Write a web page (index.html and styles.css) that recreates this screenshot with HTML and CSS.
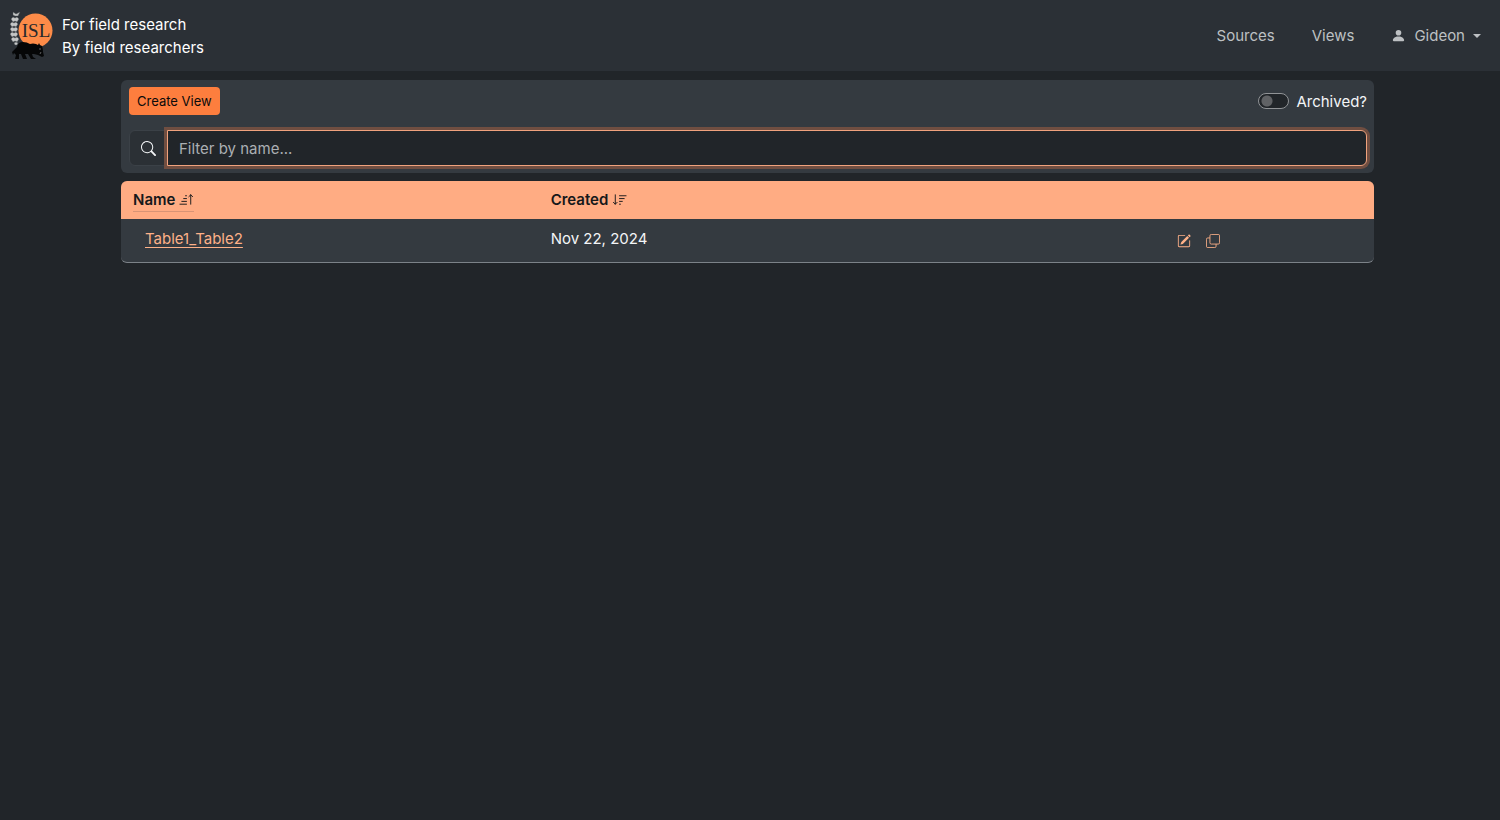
FILE: index.html
```html
<!DOCTYPE html>
<html lang="en">
<head>
    <meta charset="UTF-8">
    <meta name="viewport" content="width=device-width, initial-scale=1.0">
    <title>Views</title>
    <link rel="stylesheet" href="styles.css">
</head>
<body>
    <header class="navbar">
        <a class="brand" href="#">
            <svg class="logo" viewBox="0 0 46 50" aria-hidden="true">
                <circle cx="26.5" cy="19.5" r="17" fill="#fd8b48"/>
                <text class="logo-text" x="27" y="26" text-anchor="middle">ISL</text>
                <g fill="#c4c6c6" stroke="#4a4e51" stroke-width=".4">
                    <path d="M4 1l3 2 4-2-2 4H6L4 4z"/>
                    <path d="M2 8l2-2 2 1 2-1 2 2-2 3-2-1-2 1z"/>
                    <path d="M1 13l2-2 2 1 2-1 2 2-2 3-2-1-2 1z"/>
                    <path d="M1 18l2-2 2 1 2-1 2 2-2 3-2-1-2 1z"/>
                    <path d="M1 23l2-2 2 1 2-1 2 2-2 3-2-1-2 1z"/>
                    <path d="M2 28l2-2 2 1 2-1 2 2-2 3-2-1-2 1z"/>
                    <path d="M5 32l2-1 2 1-1 2-2 0z"/>
                </g>
                <path d="M8 36Q9 31 14 31q4 0 7 2 3-1 6 0l2 1 1-2 1 2 2 1q1 3 1 6l1 4-2 1-4-2-4-1-2 0 1 3 3 2h-5l-3-5-3 0 2 5h-4l-2-5-2 0 0 5h-4l1-4-2-2-1 2-1-3z" fill="#050607"/>
                <path d="M30 38l2 0M31 43l1-2" stroke="#777" stroke-width=".8"/>
            </svg>
            <span class="tagline">For field research<br>By field researchers</span>
        </a>
        <nav class="nav-links">
            <a href="#">Sources</a>
            <a href="#">Views</a>
            <button type="button" class="user-menu">
                <svg class="user-icon" viewBox="0 0 16 16" fill="currentColor" aria-hidden="true"><path d="M3 14s-1 0-1-1 1-4 6-4 6 3 6 4-1 1-1 1zm5-6a3 3 0 1 0 0-6 3 3 0 0 0 0 6"/></svg>
                Gideon
                <span class="caret"></span>
            </button>
        </nav>
    </header>

    <main class="container">
        <section class="toolbar">
            <div class="toolbar-row">
                <button type="button" class="btn-create">Create View</button>
                <label class="switch"><input type="checkbox"> Archived?</label>
            </div>
            <div class="filter">
                <label class="filter-icon" for="filterName" aria-label="Filter by name">
                    <svg viewBox="0 0 16 16" fill="currentColor" aria-hidden="true"><path d="M11.742 10.344a6.5 6.5 0 1 0-1.397 1.398h-.001q.044.06.098.115l3.85 3.85a1 1 0 0 0 1.415-1.414l-3.85-3.85a1 1 0 0 0-.115-.1zM12 6.5a5.5 5.5 0 1 1-11 0 5.5 5.5 0 0 1 11 0"/></svg>
                </label>
                <input type="text" id="filterName" class="filter-input" placeholder="Filter by name...">
            </div>
        </section>

        <div class="table-card">
            <table class="views">
                <thead>
                    <tr>
                        <th class="col-name">
                            <button type="button" class="sort active">Name
                                <svg viewBox="0 0 16 16" fill="none" stroke="currentColor" stroke-linecap="round" stroke-linejoin="round" aria-hidden="true"><path d="M12.5 13V3M10.5 5l2-2 2 2M7 4h1M5 7h3M3 10h5M1 13h7"/></svg>
                            </button>
                        </th>
                        <th class="col-created">
                            <button type="button" class="sort">Created
                                <svg viewBox="0 0 16 16" fill="none" stroke="currentColor" stroke-linecap="round" stroke-linejoin="round" aria-hidden="true"><path d="M3.5 3v10M1.5 11l2 2 2-2M8 4h7M8 7h5M8 10h3M8 13h1"/></svg>
                            </button>
                        </th>
                        <th></th>
                    </tr>
                </thead>
                <tbody>
                    <tr>
                        <td class="name-cell"><a href="#">Table1_Table2</a></td>
                        <td>Nov 22, 2024</td>
                        <td>
                            <div class="actions">
                                <button type="button" aria-label="Edit"><svg viewBox="0 0 16 16" fill="currentColor" aria-hidden="true"><path d="M15.502 1.94a.5.5 0 0 1 0 .706L14.459 3.69l-2-2L13.502.646a.5.5 0 0 1 .707 0l1.293 1.293zm-1.75 2.456-2-2L4.939 9.21a.5.5 0 0 0-.121.196l-.805 2.414a.25.25 0 0 0 .316.316l2.414-.805a.5.5 0 0 0 .196-.12z"/><path d="M1 13.5A1.5 1.5 0 0 0 2.5 15h11a1.5 1.5 0 0 0 1.5-1.5v-6a.5.5 0 0 0-1 0v6a.5.5 0 0 1-.5.5h-11a.5.5 0 0 1-.5-.5v-11a.5.5 0 0 1 .5-.5H9a.5.5 0 0 0 0-1H2.5A1.5 1.5 0 0 0 1 2.5z"/></svg></button>
                                <button type="button" aria-label="Copy"><svg viewBox="0 0 16 16" fill="none" stroke="currentColor" aria-hidden="true"><rect x="4.5" y=".5" width="11" height="11" rx="1.5"/><path d="M4.5 4.5H2A1.5 1.5 0 0 0 .5 6v8A1.5 1.5 0 0 0 2 15.5h8a1.5 1.5 0 0 0 1.5-1.5v-2.5"/></svg></button>
                            </div>
                        </td>
                    </tr>
                </tbody>
            </table>
        </div>
    </main>
</body>
</html>
```
FILE: styles.css
```css
* {
    box-sizing: border-box;
}

body {
    margin: 0;
    min-height: 100vh;
    background-color: #212529;
    color: #f3f5f7;
    font-family: Inter, Roboto, sans-serif;
    font-size: 15px;
    line-height: 23px;
}

button {
    border: none;
    background: none;
    padding: 0;
    color: inherit;
    font: inherit;
    cursor: pointer;
}

.navbar {
    display: flex;
    align-items: center;
    justify-content: space-between;
    height: 71px;
    padding: 0 19px 0 9px;
    background-color: #2b3036;
}

.brand {
    display: flex;
    align-items: center;
    gap: 7px;
    color: #ffffff;
    text-decoration: none;
}

.logo {
    width: 46px;
    height: 50px;
}

.logo-text {
    fill: #26292c;
    font-family: "Liberation Serif", serif;
    font-size: 19px;
}

.nav-links {
    display: flex;
    align-items: center;
    gap: 37px;
    color: #bdc0c3;
}

.nav-links a {
    color: inherit;
    text-decoration: none;
}

.user-menu {
    display: flex;
    align-items: center;
    gap: 8px;
}

.user-icon {
    width: 15px;
    height: 15px;
}

.caret {
    border-top: 4px solid;
    border-left: 4px solid transparent;
    border-right: 4px solid transparent;
}

.container {
    display: flex;
    flex-direction: column;
    gap: 8px;
    padding: 9px 126px 0 121px;
}

.toolbar {
    display: flex;
    flex-direction: column;
    gap: 15px;
    padding: 7px 7px 7px 8px;
    border-radius: 6px;
    background-color: #343a40;
}

.toolbar-row {
    display: flex;
    align-items: center;
    justify-content: space-between;
}

.btn-create {
    height: 28px;
    padding: 0 8px;
    border-radius: 4px;
    background-color: #fd7e3e;
    color: #0b0b0b;
    font-size: 13px;
}

.switch {
    display: flex;
    align-items: center;
    gap: 7px;
}

.switch input {
    appearance: none;
    width: 31px;
    height: 16px;
    margin: 0;
    border: 1px solid #909396;
    border-radius: 8px;
    background: radial-gradient(circle at 8px 7px, #606265 5px, transparent 6px) #212529;
}

.filter {
    display: flex;
}

.filter-icon {
    display: flex;
    align-items: center;
    justify-content: center;
    width: 38px;
    border: 1px solid #3b4147;
    border-radius: 6px 0 0 6px;
    background-color: #2b3035;
}

.filter-icon svg {
    width: 15px;
    height: 15px;
}

.filter-input {
    flex: 1;
    min-width: 0;
    height: 36px;
    padding: 0 11px;
    border: 1px solid #f0a27d;
    border-radius: 0 6px 6px 0;
    outline: none;
    background-color: #212529;
    box-shadow: 0 0 0 3px #704e41;
    color: #dee2e6;
    font: inherit;
}

.filter-input::placeholder {
    color: #abafb3;
}

.table-card {
    overflow: hidden;
    border-bottom: 1px solid #7c8288;
    border-radius: 6px;
    background-color: #343a40;
}

.views {
    width: 100%;
    border-collapse: collapse;
    table-layout: fixed;
}

.views th,
.views td {
    padding: 0 12px;
    text-align: left;
    vertical-align: middle;
}

.views th {
    height: 38px;
    background-color: #ffac83;
    color: #15181a;
}

.views td {
    height: 43px;
    padding-bottom: 5px;
}

.views .name-cell {
    padding-left: 24px;
}

.name-cell a {
    color: #feb188;
    text-underline-offset: 3px;
}

.col-name {
    width: 33.333%;
}

.col-created {
    width: 50%;
}

.sort {
    display: inline-flex;
    align-items: center;
    gap: 4px;
    border-bottom: 1px solid transparent;
    font-weight: 600;
}

.sort.active {
    border-bottom-color: #d89475;
}

.sort svg {
    width: 15px;
    height: 15px;
}

.actions {
    display: flex;
    gap: 15px;
    padding-top: 5px;
    color: #feb188;
}

.actions button,
.actions svg {
    display: block;
    width: 14px;
    height: 14px;
}
```
